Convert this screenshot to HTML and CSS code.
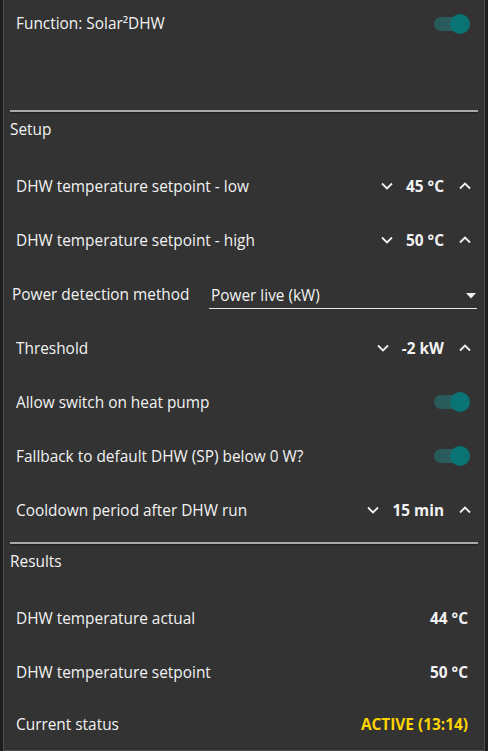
FILE: index.html
```html
<!DOCTYPE html>
<html lang="en">
<head>
  <meta charset="UTF-8" />
  <meta name="viewport" content="width=device-width, initial-scale=1.0"/>
  <title>Solar DHW</title>
  <link rel="stylesheet" href="styles.css">
</head>
<body>

  <div class="card">

    <div class="row first-row">
      <span>Function: Solar²DHW</span>
      <span class="toggle on"><span class="knob"></span></span>
    </div>
    <div class="spacer"></div>

    <hr class="divider">
    <div class="section-title">Setup</div>

    <div class="row">
      <span>DHW temperature setpoint - low</span>
      <div class="stepper">
        <button class="step"><svg width="12" height="8" viewBox="0 0 12 8"><polyline points="1,1.5 6,6.5 11,1.5" /></svg></button>
        <span class="value">45 °C</span>
        <button class="step"><svg width="12" height="8" viewBox="0 0 12 8"><polyline points="1,6.5 6,1.5 11,6.5" /></svg></button>
      </div>
    </div>

    <div class="row">
      <span>DHW temperature setpoint - high</span>
      <div class="stepper">
        <button class="step"><svg width="12" height="8" viewBox="0 0 12 8"><polyline points="1,1.5 6,6.5 11,1.5" /></svg></button>
        <span class="value">50 °C</span>
        <button class="step"><svg width="12" height="8" viewBox="0 0 12 8"><polyline points="1,6.5 6,1.5 11,6.5" /></svg></button>
      </div>
    </div>

    <div class="row select-row">
      <span>Power detection method</span>
      <div class="select">
        <span>Power live (kW)</span>
        <svg width="10" height="6" viewBox="0 0 10 6"><polygon points="0,0 10,0 5,5.5" /></svg>
      </div>
    </div>

    <div class="row">
      <span>Threshold</span>
      <div class="stepper">
        <button class="step"><svg width="12" height="8" viewBox="0 0 12 8"><polyline points="1,1.5 6,6.5 11,1.5" /></svg></button>
        <span class="value">-2 kW</span>
        <button class="step"><svg width="12" height="8" viewBox="0 0 12 8"><polyline points="1,6.5 6,1.5 11,6.5" /></svg></button>
      </div>
    </div>

    <div class="row">
      <span>Allow switch on heat pump</span>
      <span class="toggle on"><span class="knob"></span></span>
    </div>

    <div class="row">
      <span>Fallback to default DHW (SP) below 0 W?</span>
      <span class="toggle on"><span class="knob"></span></span>
    </div>

    <div class="row">
      <span>Cooldown period after DHW run</span>
      <div class="stepper">
        <button class="step"><svg width="12" height="8" viewBox="0 0 12 8"><polyline points="1,1.5 6,6.5 11,1.5" /></svg></button>
        <span class="value">15 min</span>
        <button class="step"><svg width="12" height="8" viewBox="0 0 12 8"><polyline points="1,6.5 6,1.5 11,6.5" /></svg></button>
      </div>
    </div>

    <hr class="divider results-divider">
    <div class="section-title">Results</div>

    <div class="row result-row">
      <span>DHW temperature actual</span>
      <span class="value">44 °C</span>
    </div>

    <div class="row result-row">
      <span>DHW temperature setpoint</span>
      <span class="value">50 °C</span>
    </div>

    <div class="row result-row last-row">
      <span>Current status</span>
      <span class="value status">ACTIVE (13:14)</span>
    </div>

  </div>

</body>
</html>
```

FILE: styles.css
```css
body {
  margin: 0;
  background-color: #1e1e1e;
  font-family: "Open Sans", "Noto Sans", sans-serif;
  font-size: 15.4px;
  color: #f2f2f2;
}

.card {
  margin: 0 3px;
  padding: 0 6px;
  background-color: #333333;
  border: 1px solid #4d4d4d;
  border-top: none;
}

.row {
  height: 54px;
  padding: 0 9px 0 6px;
  display: flex;
  justify-content: space-between;
  align-items: center;
}

.first-row {
  height: 47px;
}

.spacer {
  height: 63px;
}

.divider {
  margin: 0;
  border: none;
  height: 2px;
  background-color: #a9a9a9;
  box-shadow: 0 1px 2px rgba(0, 0, 0, 0.5);
}

.results-divider {
  margin-top: 5px;
}

.section-title {
  height: 47px;
  padding-top: 8px;
  box-sizing: border-box;
  line-height: 20px;
}

/* toggle switch */
.toggle {
  position: relative;
  width: 34px;
  height: 14px;
  border-radius: 7px;
  background-color: #2a5b5b;
  margin-right: 1px;
}

.knob {
  position: absolute;
  top: -3px;
  right: -2px;
  width: 20px;
  height: 20px;
  border-radius: 50%;
  background-color: #0a7474;
}

/* number stepper */
.stepper {
  display: flex;
  align-items: center;
  margin-right: -8px;
}

.step {
  width: 24px;
  height: 24px;
  padding: 0;
  border: none;
  background: none;
  display: flex;
  align-items: center;
  justify-content: center;
}

.step svg polyline {
  fill: none;
  stroke: #f2f2f2;
  stroke-width: 1.8;
}

.stepper .value {
  margin: 0 9px 0 7px;
}

.value {
  font-weight: bold;
}

/* select */
.select-row {
  padding: 0 1px 0 2px;
}

.select {
  width: 268px;
  height: 26px;
  box-sizing: border-box;
  padding: 0 1px 0 2px;
  border-bottom: 1px solid #e6e6e6;
  display: flex;
  justify-content: space-between;
  align-items: center;
  margin-top: 4px;
}

.select svg polygon {
  fill: #f2f2f2;
}

.result-row {
  padding-right: 10px;
}

.last-row {
  height: 51px;
}

.status {
  color: #ffd500;
}
```
